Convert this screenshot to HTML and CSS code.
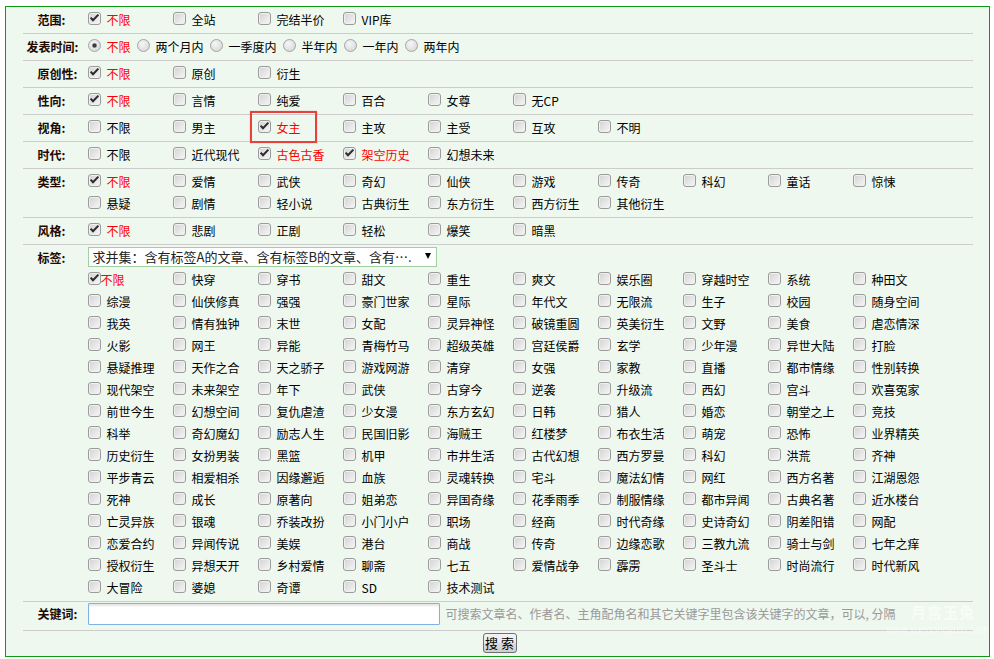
FILE: index.html
```html
<!DOCTYPE html>
<html lang="zh-CN">
<head>
<meta charset="utf-8">
<title>搜索</title>
<link rel="stylesheet" href="styles.css">
</head>
<body>
<form class="box">
  <div class="form">
    <div class="row">
      <div class="lab">范围:</div>
      <div class="opts">
        <label class="opt on"><span class="cb"><svg viewBox="0 0 11 11" width="11" height="11"><path d="M1.6 4.6L4 7.2L9.4 1.6" fill="none" stroke="#2b2b2b" stroke-width="2"/></svg></span>不限</label>
        <label class="opt"><span class="cb"></span>全站</label>
        <label class="opt"><span class="cb"></span>完结半价</label>
        <label class="opt"><span class="cb"></span>VIP库</label>
      </div>
    </div>
    <div class="row">
      <div class="lab"><span class="wide">发表时间:</span></div>
      <div class="radios">
        <label class="r on"><span class="rb dot"></span>不限</label>
        <label class="r"><span class="rb"></span>两个月内</label>
        <label class="r"><span class="rb"></span>一季度内</label>
        <label class="r"><span class="rb"></span>半年内</label>
        <label class="r"><span class="rb"></span>一年内</label>
        <label class="r"><span class="rb"></span>两年内</label>
      </div>
    </div>
    <div class="row">
      <div class="lab">原创性:</div>
      <div class="opts">
        <label class="opt on"><span class="cb"><svg viewBox="0 0 11 11" width="11" height="11"><path d="M1.6 4.6L4 7.2L9.4 1.6" fill="none" stroke="#2b2b2b" stroke-width="2"/></svg></span>不限</label>
        <label class="opt"><span class="cb"></span>原创</label>
        <label class="opt"><span class="cb"></span>衍生</label>
      </div>
    </div>
    <div class="row">
      <div class="lab">性向:</div>
      <div class="opts">
        <label class="opt on"><span class="cb"><svg viewBox="0 0 11 11" width="11" height="11"><path d="M1.6 4.6L4 7.2L9.4 1.6" fill="none" stroke="#2b2b2b" stroke-width="2"/></svg></span>不限</label>
        <label class="opt"><span class="cb"></span>言情</label>
        <label class="opt"><span class="cb"></span>纯爱</label>
        <label class="opt"><span class="cb"></span>百合</label>
        <label class="opt"><span class="cb"></span>女尊</label>
        <label class="opt"><span class="cb"></span>无CP</label>
      </div>
    </div>
    <div class="row">
      <div class="lab">视角:</div>
      <div class="opts">
        <label class="opt"><span class="cb"></span>不限</label>
        <label class="opt"><span class="cb"></span>男主</label>
        <label class="opt on mark"><span class="cb"><svg viewBox="0 0 11 11" width="11" height="11"><path d="M1.6 4.6L4 7.2L9.4 1.6" fill="none" stroke="#2b2b2b" stroke-width="2"/></svg></span>女主</label>
        <label class="opt"><span class="cb"></span>主攻</label>
        <label class="opt"><span class="cb"></span>主受</label>
        <label class="opt"><span class="cb"></span>互攻</label>
        <label class="opt"><span class="cb"></span>不明</label>
      </div>
    </div>
    <div class="row">
      <div class="lab">时代:</div>
      <div class="opts">
        <label class="opt"><span class="cb"></span>不限</label>
        <label class="opt"><span class="cb"></span>近代现代</label>
        <label class="opt on"><span class="cb"><svg viewBox="0 0 11 11" width="11" height="11"><path d="M1.6 4.6L4 7.2L9.4 1.6" fill="none" stroke="#2b2b2b" stroke-width="2"/></svg></span>古色古香</label>
        <label class="opt on"><span class="cb"><svg viewBox="0 0 11 11" width="11" height="11"><path d="M1.6 4.6L4 7.2L9.4 1.6" fill="none" stroke="#2b2b2b" stroke-width="2"/></svg></span>架空历史</label>
        <label class="opt"><span class="cb"></span>幻想未来</label>
      </div>
    </div>
    <div class="row">
      <div class="lab">类型:</div>
      <div class="opts">
        <label class="opt on"><span class="cb"><svg viewBox="0 0 11 11" width="11" height="11"><path d="M1.6 4.6L4 7.2L9.4 1.6" fill="none" stroke="#2b2b2b" stroke-width="2"/></svg></span>不限</label>
        <label class="opt"><span class="cb"></span>爱情</label>
        <label class="opt"><span class="cb"></span>武侠</label>
        <label class="opt"><span class="cb"></span>奇幻</label>
        <label class="opt"><span class="cb"></span>仙侠</label>
        <label class="opt"><span class="cb"></span>游戏</label>
        <label class="opt"><span class="cb"></span>传奇</label>
        <label class="opt"><span class="cb"></span>科幻</label>
        <label class="opt"><span class="cb"></span>童话</label>
        <label class="opt"><span class="cb"></span>惊悚</label>
        <label class="opt"><span class="cb"></span>悬疑</label>
        <label class="opt"><span class="cb"></span>剧情</label>
        <label class="opt"><span class="cb"></span>轻小说</label>
        <label class="opt"><span class="cb"></span>古典衍生</label>
        <label class="opt"><span class="cb"></span>东方衍生</label>
        <label class="opt"><span class="cb"></span>西方衍生</label>
        <label class="opt"><span class="cb"></span>其他衍生</label>
      </div>
    </div>
    <div class="row">
      <div class="lab">风格:</div>
      <div class="opts">
        <label class="opt on"><span class="cb"><svg viewBox="0 0 11 11" width="11" height="11"><path d="M1.6 4.6L4 7.2L9.4 1.6" fill="none" stroke="#2b2b2b" stroke-width="2"/></svg></span>不限</label>
        <label class="opt"><span class="cb"></span>悲剧</label>
        <label class="opt"><span class="cb"></span>正剧</label>
        <label class="opt"><span class="cb"></span>轻松</label>
        <label class="opt"><span class="cb"></span>爆笑</label>
        <label class="opt"><span class="cb"></span>暗黑</label>
      </div>
    </div>
    <div class="row">
      <div class="lab">标签:</div>
      <div class="tagcell">
        <div class="selwrap">
          <select class="sel"><option>求并集：含有标签A的文章、含有标签B的文章、含有….</option></select>
          <span class="arr"></span>
        </div>
        <div class="opts">
          <label class="opt on tight"><span class="cb"><svg viewBox="0 0 11 11" width="11" height="11"><path d="M1.6 4.6L4 7.2L9.4 1.6" fill="none" stroke="#2b2b2b" stroke-width="2"/></svg></span>不限</label>
          <label class="opt"><span class="cb"></span>快穿</label>
          <label class="opt"><span class="cb"></span>穿书</label>
          <label class="opt"><span class="cb"></span>甜文</label>
          <label class="opt"><span class="cb"></span>重生</label>
          <label class="opt"><span class="cb"></span>爽文</label>
          <label class="opt"><span class="cb"></span>娱乐圈</label>
          <label class="opt"><span class="cb"></span>穿越时空</label>
          <label class="opt"><span class="cb"></span>系统</label>
          <label class="opt"><span class="cb"></span>种田文</label>
          <label class="opt"><span class="cb"></span>综漫</label>
          <label class="opt"><span class="cb"></span>仙侠修真</label>
          <label class="opt"><span class="cb"></span>强强</label>
          <label class="opt"><span class="cb"></span>豪门世家</label>
          <label class="opt"><span class="cb"></span>星际</label>
          <label class="opt"><span class="cb"></span>年代文</label>
          <label class="opt"><span class="cb"></span>无限流</label>
          <label class="opt"><span class="cb"></span>生子</label>
          <label class="opt"><span class="cb"></span>校园</label>
          <label class="opt"><span class="cb"></span>随身空间</label>
          <label class="opt"><span class="cb"></span>我英</label>
          <label class="opt"><span class="cb"></span>情有独钟</label>
          <label class="opt"><span class="cb"></span>末世</label>
          <label class="opt"><span class="cb"></span>女配</label>
          <label class="opt"><span class="cb"></span>灵异神怪</label>
          <label class="opt"><span class="cb"></span>破镜重圆</label>
          <label class="opt"><span class="cb"></span>英美衍生</label>
          <label class="opt"><span class="cb"></span>文野</label>
          <label class="opt"><span class="cb"></span>美食</label>
          <label class="opt"><span class="cb"></span>虐恋情深</label>
          <label class="opt"><span class="cb"></span>火影</label>
          <label class="opt"><span class="cb"></span>网王</label>
          <label class="opt"><span class="cb"></span>异能</label>
          <label class="opt"><span class="cb"></span>青梅竹马</label>
          <label class="opt"><span class="cb"></span>超级英雄</label>
          <label class="opt"><span class="cb"></span>宫廷侯爵</label>
          <label class="opt"><span class="cb"></span>玄学</label>
          <label class="opt"><span class="cb"></span>少年漫</label>
          <label class="opt"><span class="cb"></span>异世大陆</label>
          <label class="opt"><span class="cb"></span>打脸</label>
          <label class="opt"><span class="cb"></span>悬疑推理</label>
          <label class="opt"><span class="cb"></span>天作之合</label>
          <label class="opt"><span class="cb"></span>天之骄子</label>
          <label class="opt"><span class="cb"></span>游戏网游</label>
          <label class="opt"><span class="cb"></span>清穿</label>
          <label class="opt"><span class="cb"></span>女强</label>
          <label class="opt"><span class="cb"></span>家教</label>
          <label class="opt"><span class="cb"></span>直播</label>
          <label class="opt"><span class="cb"></span>都市情缘</label>
          <label class="opt"><span class="cb"></span>性别转换</label>
          <label class="opt"><span class="cb"></span>现代架空</label>
          <label class="opt"><span class="cb"></span>未来架空</label>
          <label class="opt"><span class="cb"></span>年下</label>
          <label class="opt"><span class="cb"></span>武侠</label>
          <label class="opt"><span class="cb"></span>古穿今</label>
          <label class="opt"><span class="cb"></span>逆袭</label>
          <label class="opt"><span class="cb"></span>升级流</label>
          <label class="opt"><span class="cb"></span>西幻</label>
          <label class="opt"><span class="cb"></span>宫斗</label>
          <label class="opt"><span class="cb"></span>欢喜冤家</label>
          <label class="opt"><span class="cb"></span>前世今生</label>
          <label class="opt"><span class="cb"></span>幻想空间</label>
          <label class="opt"><span class="cb"></span>复仇虐渣</label>
          <label class="opt"><span class="cb"></span>少女漫</label>
          <label class="opt"><span class="cb"></span>东方玄幻</label>
          <label class="opt"><span class="cb"></span>日韩</label>
          <label class="opt"><span class="cb"></span>猎人</label>
          <label class="opt"><span class="cb"></span>婚恋</label>
          <label class="opt"><span class="cb"></span>朝堂之上</label>
          <label class="opt"><span class="cb"></span>竞技</label>
          <label class="opt"><span class="cb"></span>科举</label>
          <label class="opt"><span class="cb"></span>奇幻魔幻</label>
          <label class="opt"><span class="cb"></span>励志人生</label>
          <label class="opt"><span class="cb"></span>民国旧影</label>
          <label class="opt"><span class="cb"></span>海贼王</label>
          <label class="opt"><span class="cb"></span>红楼梦</label>
          <label class="opt"><span class="cb"></span>布衣生活</label>
          <label class="opt"><span class="cb"></span>萌宠</label>
          <label class="opt"><span class="cb"></span>恐怖</label>
          <label class="opt"><span class="cb"></span>业界精英</label>
          <label class="opt"><span class="cb"></span>历史衍生</label>
          <label class="opt"><span class="cb"></span>女扮男装</label>
          <label class="opt"><span class="cb"></span>黑篮</label>
          <label class="opt"><span class="cb"></span>机甲</label>
          <label class="opt"><span class="cb"></span>市井生活</label>
          <label class="opt"><span class="cb"></span>古代幻想</label>
          <label class="opt"><span class="cb"></span>西方罗曼</label>
          <label class="opt"><span class="cb"></span>科幻</label>
          <label class="opt"><span class="cb"></span>洪荒</label>
          <label class="opt"><span class="cb"></span>齐神</label>
          <label class="opt"><span class="cb"></span>平步青云</label>
          <label class="opt"><span class="cb"></span>相爱相杀</label>
          <label class="opt"><span class="cb"></span>因缘邂逅</label>
          <label class="opt"><span class="cb"></span>血族</label>
          <label class="opt"><span class="cb"></span>灵魂转换</label>
          <label class="opt"><span class="cb"></span>宅斗</label>
          <label class="opt"><span class="cb"></span>魔法幻情</label>
          <label class="opt"><span class="cb"></span>网红</label>
          <label class="opt"><span class="cb"></span>西方名著</label>
          <label class="opt"><span class="cb"></span>江湖恩怨</label>
          <label class="opt"><span class="cb"></span>死神</label>
          <label class="opt"><span class="cb"></span>成长</label>
          <label class="opt"><span class="cb"></span>原著向</label>
          <label class="opt"><span class="cb"></span>姐弟恋</label>
          <label class="opt"><span class="cb"></span>异国奇缘</label>
          <label class="opt"><span class="cb"></span>花季雨季</label>
          <label class="opt"><span class="cb"></span>制服情缘</label>
          <label class="opt"><span class="cb"></span>都市异闻</label>
          <label class="opt"><span class="cb"></span>古典名著</label>
          <label class="opt"><span class="cb"></span>近水楼台</label>
          <label class="opt"><span class="cb"></span>亡灵异族</label>
          <label class="opt"><span class="cb"></span>银魂</label>
          <label class="opt"><span class="cb"></span>乔装改扮</label>
          <label class="opt"><span class="cb"></span>小门小户</label>
          <label class="opt"><span class="cb"></span>职场</label>
          <label class="opt"><span class="cb"></span>经商</label>
          <label class="opt"><span class="cb"></span>时代奇缘</label>
          <label class="opt"><span class="cb"></span>史诗奇幻</label>
          <label class="opt"><span class="cb"></span>阴差阳错</label>
          <label class="opt"><span class="cb"></span>网配</label>
          <label class="opt"><span class="cb"></span>恋爱合约</label>
          <label class="opt"><span class="cb"></span>异闻传说</label>
          <label class="opt"><span class="cb"></span>美娱</label>
          <label class="opt"><span class="cb"></span>港台</label>
          <label class="opt"><span class="cb"></span>商战</label>
          <label class="opt"><span class="cb"></span>传奇</label>
          <label class="opt"><span class="cb"></span>边缘恋歌</label>
          <label class="opt"><span class="cb"></span>三教九流</label>
          <label class="opt"><span class="cb"></span>骑士与剑</label>
          <label class="opt"><span class="cb"></span>七年之痒</label>
          <label class="opt"><span class="cb"></span>授权衍生</label>
          <label class="opt"><span class="cb"></span>异想天开</label>
          <label class="opt"><span class="cb"></span>乡村爱情</label>
          <label class="opt"><span class="cb"></span>聊斋</label>
          <label class="opt"><span class="cb"></span>七五</label>
          <label class="opt"><span class="cb"></span>爱情战争</label>
          <label class="opt"><span class="cb"></span>霹雳</label>
          <label class="opt"><span class="cb"></span>圣斗士</label>
          <label class="opt"><span class="cb"></span>时尚流行</label>
          <label class="opt"><span class="cb"></span>时代新风</label>
          <label class="opt"><span class="cb"></span>大冒险</label>
          <label class="opt"><span class="cb"></span>婆媳</label>
          <label class="opt"><span class="cb"></span>奇谭</label>
          <label class="opt"><span class="cb"></span>SD</label>
          <label class="opt"><span class="cb"></span>技术测试</label>
        </div>
      </div>
    </div>
    <div class="row kw">
      <div class="lab">关键词:</div>
      <div class="kwcell">
        <input class="kwinput" type="text">
        <span class="hint">可搜索文章名、作者名、主角配角名和其它关键字里包含该关键字的文章，可以, 分隔</span>
      </div>
    </div>
    <div class="btnrow">
      <button type="button" class="btn">搜&nbsp;索</button>
    </div>
  </div>
  <div class="wm">
    <div class="wm1">月宫玉兔</div>
    <div class="wm2">www.yuegongyutu.com</div>
  </div>
</form>
</body>
</html>
```

FILE: styles.css
```css
* { box-sizing: border-box; }
html, body { margin: 0; padding: 0; background: #fff; }
body {
  font-family: "Noto Sans CJK SC", "Noto Sans", sans-serif;
  font-size: 12px;
  color: #000;
}
.box {
  position: relative;
  display: block;
  margin: 6px 0 0 5px;
  width: 985px;
  border: 1px solid #109a10;
  background: #eef8ee;
}
.form { width: 950px; margin: 0 auto; }
.row {
  display: grid;
  grid-template-columns: 65px 885px;
  padding: 2px 0;
  border-bottom: 1px solid #cccccc;
}
.lab {
  padding-left: 15px;
  line-height: 22px;
  font-weight: bold;
  color: #220800;
  white-space: nowrap;
}
.lab .wide { margin-left: -11px; }
.opts { display: flex; flex-wrap: wrap; }
.opt {
  width: 85px;
  height: 22px;
  display: flex;
  align-items: center;
  white-space: nowrap;
  line-height: 22px;
}
.opt.on { color: #ff0000; }
.cb {
  flex: none;
  width: 13px;
  height: 13px;
  margin: -3px 6px 0 0;
  border: 1px solid #9b9b9b;
  border-radius: 3px;
  background: linear-gradient(135deg, #d2d2d2, #f7f7f7);
  box-shadow: inset 0 0 0 1px #f0f0f0;
  display: flex;
  align-items: center;
  justify-content: center;
}
.cb svg { display: block; }
.opt.tight .cb { margin-right: 0; }
.opt.mark { position: relative; }
.opt.mark::after {
  content: "";
  position: absolute;
  left: -8px;
  top: -6px;
  width: 63px;
  height: 28px;
  border: 2px solid #e8403a;
  box-shadow: 0 0 1px rgba(232, 64, 58, 0.5);
}
.radios { display: flex; align-items: center; height: 22px; }
.r {
  display: flex;
  align-items: center;
  margin-right: 6px;
  line-height: 22px;
  white-space: nowrap;
}
.r.on { color: #ff0000; }
.rb {
  flex: none;
  width: 13px;
  height: 13px;
  margin: -3px 6px 0 0;
  border: 1px solid #a4a4a4;
  border-radius: 50%;
  background: radial-gradient(circle at 40% 35%, #f6f6f6, #d2d2d2);
}
.rb.dot {
  background:
    radial-gradient(circle, #3c3c3c 0 1.6px, #9a9a9a 2.2px, rgba(0,0,0,0) 3px),
    radial-gradient(circle at 40% 35%, #f6f6f6, #d2d2d2);
}
.tagcell { display: flex; flex-direction: column; }
.selwrap {
  position: relative;
  width: 349px;
  height: 20px;
  margin-bottom: 2px;
}
.sel {
  -webkit-appearance: none;
  appearance: none;
  display: block;
  width: 349px;
  height: 20px;
  margin: 0;
  padding: 0 20px 0 4px;
  border: 1px solid #a2cfa2;
  border-radius: 0;
  background: #fff;
  font-family: "Noto Sans CJK SC", "Noto Sans", sans-serif;
  font-size: 13px;
  color: #222;
  line-height: 18px;
}
.arr {
  position: absolute;
  right: 6px;
  top: 6px;
  width: 0;
  height: 0;
  border-left: 3px solid transparent;
  border-right: 3px solid transparent;
  border-top: 6px solid #000;
}
.row.kw { padding: 1px 0 3px; }
.kwcell { display: flex; align-items: center; height: 24px; align-self: start; }
.kwinput {
  width: 352px;
  height: 22px;
  margin: 0;
  padding: 0 2px;
  border: 1px solid #80b2e4;
  border-radius: 1px;
  background: #fff;
  box-shadow: inset 0 2px 2px rgba(0, 0, 0, 0.1);
  outline: none;
  align-self: flex-start;
}
.hint {
  margin-left: 6px;
  color: #999;
  white-space: nowrap;
  line-height: 22px;
  align-self: flex-start;
}
.btnrow {
  padding: 2px 0 3px 4px;
  height: 25px;
  text-align: center;
}
.btn {
  width: 34px;
  height: 20px;
  padding: 0;
  margin: 0;
  border: 1px solid #707070;
  border-radius: 3px;
  background: linear-gradient(#f3f3f3, #ebebeb 50%, #dddddd 51%, #cfcfcf);
  font-family: "Noto Sans CJK SC", "Noto Sans", sans-serif;
  font-size: 13px;
  line-height: 18px;
  color: #000;
  vertical-align: top;
  white-space: nowrap;
}
.wm {
  position: absolute;
  left: 880px;
  top: 593px;
  width: 100px;
  text-align: center;
  color: rgba(255, 255, 255, 0.6);
  pointer-events: none;
}
.wm1 { font-size: 15px; font-weight: bold; line-height: 24px; letter-spacing: 1px; padding-left: 14px; }
.wm2 { font-size: 10px; line-height: 12px; font-family: "Liberation Sans", sans-serif; }
```
